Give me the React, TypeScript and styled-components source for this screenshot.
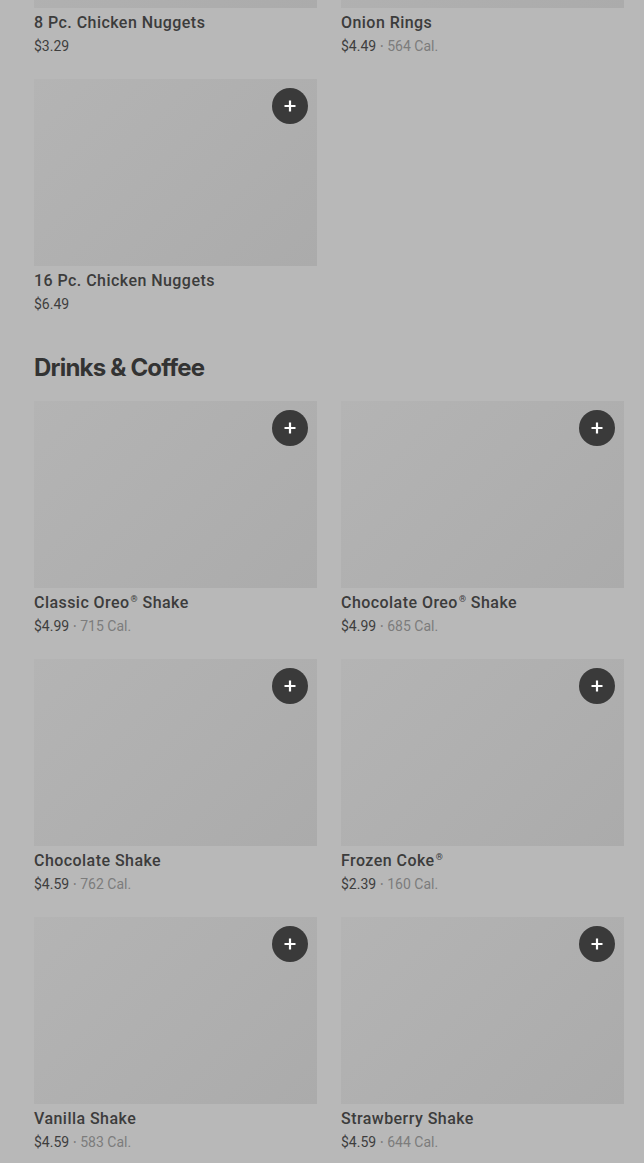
import styled, { createGlobalStyle } from "styled-components";

type Item = { name: string; price: string; cal?: string };

const sides: Item[] = [
	{ name: "8 Pc. Chicken Nuggets", price: "$3.29" },
	{ name: "Onion Rings", price: "$4.49", cal: "564 Cal." },
	{ name: "16 Pc. Chicken Nuggets", price: "$6.49" },
];

const drinks: Item[] = [
	{ name: "Classic Oreo® Shake", price: "$4.99", cal: "715 Cal." },
	{ name: "Chocolate Oreo® Shake", price: "$4.99", cal: "685 Cal." },
	{ name: "Chocolate Shake", price: "$4.59", cal: "762 Cal." },
	{ name: "Frozen Coke®", price: "$2.39", cal: "160 Cal." },
	{ name: "Vanilla Shake", price: "$4.59", cal: "583 Cal." },
	{ name: "Strawberry Shake", price: "$4.59", cal: "644 Cal." },
];

// split the name so the ® mark can be drawn small and raised
function Name({ text }: { text: string }) {
	const parts = text.split("®");
	return (
		<>
			{parts.map((p, i) => (
				<span key={i}>
					{p}
					{i < parts.length - 1 && <Reg>®</Reg>}
				</span>
			))}
		</>
	);
}

function Card({ item }: { item: Item }) {
	return (
		<CardContainer>
			<ImageBox>
				<AddButton>
					<svg width="14" height="14" viewBox="0 0 14 14">
						<path d="M7 1.5v11M1.5 7h11" stroke="#fff" strokeWidth="2.2" />
					</svg>
				</AddButton>
			</ImageBox>
			<Title>
				<Name text={item.name} />
			</Title>
			<Meta>
				{item.price}
				{item.cal && (
					<>
						<Dot>•</Dot>
						<Cal>{item.cal}</Cal>
					</>
				)}
			</Meta>
		</CardContainer>
	);
}

export default function App() {
	return (
		<>
			<GlobalStyle />
			<Page>
				<Grid>
					{sides.map((i) => (
						<Card key={i.name} item={i} />
					))}
				</Grid>
				<Heading>Drinks &amp; Coffee</Heading>
				<Grid>
					{drinks.map((i) => (
						<Card key={i.name} item={i} />
					))}
				</Grid>
			</Page>
		</>
	);
}

const GlobalStyle = createGlobalStyle`
	html, body {
		margin: 0;
		padding: 0;
		background: #b8b8b8;
		overflow: hidden;
	}
	body {
		font-family: Roboto, "Liberation Sans", sans-serif;
	}
`;

const Page = styled.main`
	margin-top: -179px;
	padding: 0 20px 40px 34px;
	background: #b8b8b8;
	min-height: 1400px;
`;

const Grid = styled.div`
	display: grid;
	grid-template-columns: 283px 283px;
	column-gap: 24px;
	row-gap: 23px;
`;

const CardContainer = styled.div`
	display: flex;
	flex-direction: column;
`;

const ImageBox = styled.div`
	position: relative;
	height: 187px;
	background: linear-gradient(135deg, #b4b4b4 0%, #ababab 100%);
`;

const AddButton = styled.div`
	position: absolute;
	top: 9px;
	right: 9px;
	width: 36px;
	height: 36px;
	border-radius: 50%;
	background: #3a3a3a;
	display: flex;
	align-items: center;
	justify-content: center;
`;

const Title = styled.div`
	margin-top: 5px;
	height: 20px;
	font-size: 16px;
	line-height: 20px;
	font-weight: 500;
	letter-spacing: 0.45px;
	color: #3c3c3c;
`;

const Reg = styled.span`
	font-size: 9px;
	line-height: 0;
	vertical-align: 6px;
	margin-left: 1px;
`;

const Meta = styled.div`
	margin-top: 3px;
	font-size: 14px;
	line-height: 20px;
	color: #3e3e3e;
	display: flex;
	align-items: center;
`;

const Dot = styled.span`
	margin: 0 4px;
	font-size: 9px;
	color: #7c7c7c;
`;

const Cal = styled.span`
	color: #7c7c7c;
`;

const Heading = styled.h2`
	margin: 38px 0 17px;
	font-family: Inter, "Liberation Sans", sans-serif;
	font-size: 24px;
	line-height: 32px;
	font-weight: 700;
	letter-spacing: -0.8px;
	color: #333;
`;
